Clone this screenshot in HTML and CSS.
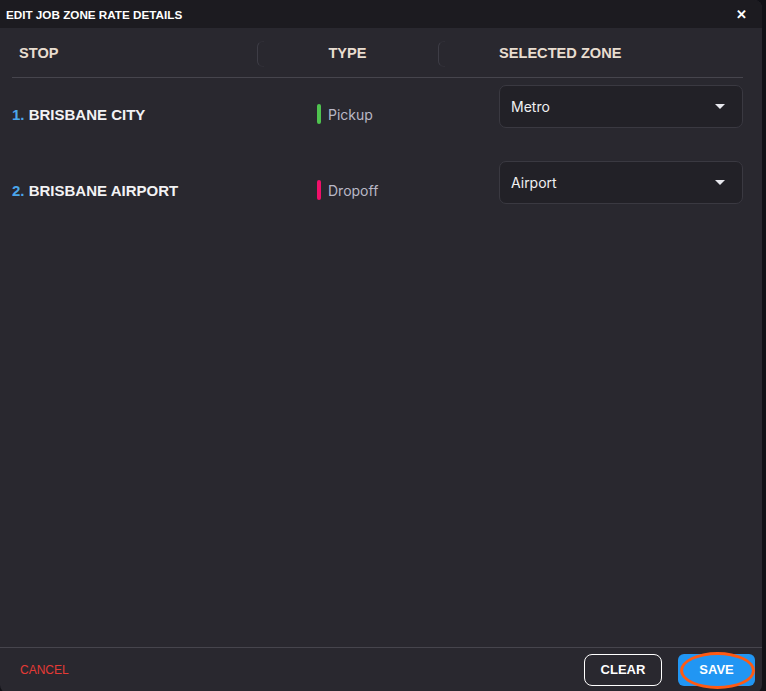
FILE: index.html
```html
<!DOCTYPE html>
<html lang="en">
<head>
    <meta charset="UTF-8">
    <title>Edit Job Zone Rate Details</title>
    <link rel="stylesheet" href="styles.css">
</head>
<body>

<div class="dialog">
    <div class="dialog-title">
        <span>EDIT JOB ZONE RATE DETAILS</span>
        <span class="close">&#x2715;</span>
    </div>

    <div class="dialog-body">
        <div class="grid-head">
            <div class="col col-stop">STOP</div>
            <div class="col col-type"><span class="sep"></span>TYPE</div>
            <div class="col col-zone"><span class="sep"></span>SELECTED ZONE</div>
        </div>

        <div class="grid-row">
            <div class="col col-stop"><span class="num">1.</span> BRISBANE CITY</div>
            <div class="col col-type"><span class="tag tag-pickup"></span>Pickup</div>
            <div class="col col-zone">
                <div class="select">
                    <span>Metro</span>
                    <svg width="10" height="5" viewBox="0 0 10 5"><path d="M0 0 L10 0 L5 5 Z" fill="#e8e8ee"/></svg>
                </div>
            </div>
        </div>

        <div class="grid-row">
            <div class="col col-stop"><span class="num">2.</span> BRISBANE AIRPORT</div>
            <div class="col col-type"><span class="tag tag-dropoff"></span>Dropoff</div>
            <div class="col col-zone">
                <div class="select">
                    <span>Airport</span>
                    <svg width="10" height="5" viewBox="0 0 10 5"><path d="M0 0 L10 0 L5 5 Z" fill="#e8e8ee"/></svg>
                </div>
            </div>
        </div>
    </div>

    <div class="dialog-footer">
        <button type="button" class="btn-cancel">CANCEL</button>
        <div class="actions">
            <button type="button" class="btn-clear">CLEAR</button>
            <button type="button" class="btn-save">SAVE<span class="ring"></span></button>
        </div>
    </div>
</div>

</body>
</html>
```

FILE: styles.css
```css
html, body {
    margin: 0;
    height: 100%;
    background: #111116;
}
body {
    font-family: "Liberation Sans", Arial, sans-serif;
    overflow: hidden;
}
.dialog {
    width: 762px;
    height: 693px;
    background: #29282f;
    border-radius: 0 8px 8px 8px;
    display: flex;
    flex-direction: column;
    overflow: hidden;
}
.dialog-title {
    height: 28px;
    background: #1c1b20;
    display: flex;
    align-items: center;
    justify-content: space-between;
    padding: 0 15px 0 6px;
    color: #ffffff;
    font-size: 11.7px;
    font-weight: bold;
}
.close {
    font-size: 13px;
    font-weight: bold;
}
.dialog-body {
    flex: 1;
    padding: 0 19px 0 12px;
}
.grid-head {
    display: flex;
    height: 49px;
    align-items: center;
    border-bottom: 1px solid #46454d;
    color: #e8ddd0;
    font-size: 14.6px;
    font-weight: bold;
}
.col-stop {
    width: 245px;
}
.col-type {
    width: 181px;
}
.col-zone {
    flex: 1;
}
.grid-head .col {
    position: relative;
    height: 26px;
    line-height: 26px;
}
.grid-head .col-stop {
    padding-left: 7px;
    box-sizing: border-box;
}
.grid-head .col-type {
    text-align: center;
}
.grid-head .col-zone {
    padding-left: 61px;
}
.sep {
    position: absolute;
    left: 0;
    top: 1px;
    width: 6px;
    height: 24px;
    border-left: 1px solid #3e3d46;
    border-top: 1px solid #302f37;
    border-bottom: 1px solid #302f37;
    border-radius: 6px 0 0 6px;
}
.grid-row {
    display: flex;
    height: 76px;
    align-items: center;
    color: #f2f2f4;
    font-size: 15px;
}
.grid-row:nth-child(2) {
    margin-top: -2px;
}
.grid-row .col-stop {
    font-weight: bold;
}
.num {
    color: #4ba6ea;
}
.grid-row .col-type {
    display: flex;
    align-items: center;
    padding-left: 60px;
    box-sizing: border-box;
    color: #b9b8c6;
    font-family: Inter, "Liberation Sans", sans-serif;
    font-size: 14px;
}
.tag {
    width: 4px;
    height: 20px;
    border-radius: 2px;
    margin-right: 7px;
}
.tag-pickup {
    background: #4fc34f;
}
.tag-dropoff {
    background: #f0106a;
}
.grid-row .col-zone {
    padding-left: 61px;
    margin-top: -16px;
}
.select {
    height: 41px;
    border: 1px solid #3a3941;
    border-radius: 7px;
    background: #222127;
    display: flex;
    align-items: center;
    justify-content: space-between;
    padding: 0 17px 0 11px;
    color: #f0f0f2;
    font-family: Inter, "Liberation Sans", sans-serif;
    font-size: 14px;
}
.dialog-footer {
    height: 43px;
    border-top: 1px solid #46454d;
    display: flex;
    align-items: center;
    justify-content: space-between;
    padding: 0 7px 2px 20px;
}
button {
    font-family: "Liberation Sans", Arial, sans-serif;
    cursor: pointer;
}
.btn-cancel {
    background: none;
    border: none;
    padding: 0;
    color: #e53a35;
    font-size: 12px;
}
.actions {
    display: flex;
    gap: 16px;
}
.btn-clear {
    width: 78px;
    height: 32px;
    background: none;
    border: 1px solid #ffffff;
    border-radius: 8px;
    color: #ffffff;
    font-size: 13px;
    font-weight: bold;
}
.btn-save {
    position: relative;
    width: 77px;
    height: 32px;
    background: #2196f3;
    border: none;
    border-radius: 6px;
    color: #ffffff;
    font-size: 13px;
    font-weight: bold;
}
.ring {
    position: absolute;
    left: 2px;
    top: -2px;
    width: 69px;
    height: 31px;
    border: 3px solid #ff5a12;
    border-radius: 50%;
}
```
